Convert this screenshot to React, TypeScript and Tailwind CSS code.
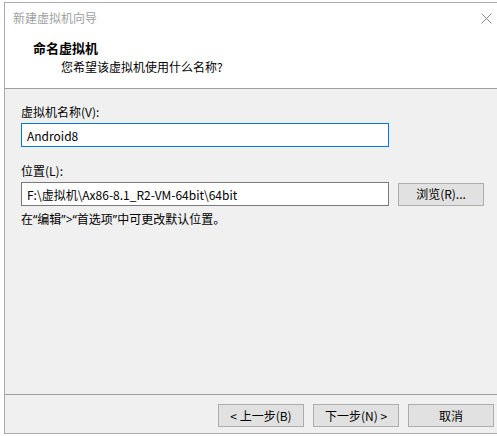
import React, { useState } from 'react';

const font = "font-['Noto_Sans_CJK_SC',sans-serif]";

const WizardButton = ({ label, className = '' }: { label: string; className?: string }) => (
  <button
    className={`h-[23px] w-[86px] border border-[#adadad] bg-[#e1e1e1] text-[12px] text-black leading-none ${className}`}
  >
    {label}
  </button>
);

const App = () => {
  const [name, setName] = useState('Android8');
  const [location, setLocation] = useState('F:\\虚拟机\\Ax86-8.1_R2-VM-64bit\\64bit');

  return (
    <div className={`w-[497px] h-[436px] bg-white pt-[2px] pl-[4px] overflow-hidden ${font}`}>
      <div className="h-[432px] flex flex-col border-t border-l border-b border-[#aaaaaa] bg-[#f0f0f0]">
        {/* title bar + header */}
        <div className="bg-white border-b border-[#a0a0a0]">
          <div className="h-[30px] flex items-center justify-between pl-[8px] pr-[4px]">
            <span className="text-[12px] text-[#a0a0a0]">新建虚拟机向导</span>
            <svg width="11" height="11" viewBox="0 0 11 11" className="mr-[1px]">
              <path d="M0.5 0.5 L10.5 10.5 M10.5 0.5 L0.5 10.5" stroke="#8a8a8a" strokeWidth="1" />
            </svg>
          </div>
          <div className="h-[55px] pt-[6px] pl-[28px]">
            <div className="text-[13px] font-bold leading-[18px] text-black">命名虚拟机</div>
            <div className="mt-[2px] pl-[28px] text-[12px] leading-[16px] text-black">您希望该虚拟机使用什么名称?</div>
          </div>
        </div>

        {/* form */}
        <div className="flex-1 pl-[16px] pt-[15px]">
          <label className="block text-[12px] leading-[16px] text-black">虚拟机名称(V):</label>
          <input
            value={name}
            onChange={e => setName(e.target.value)}
            className="mt-[3px] block h-[24px] w-[368px] border border-[#0078d7] bg-white px-[5px] text-[12px] text-black outline-none"
          />

          <label className="mt-[16px] block text-[12px] leading-[16px] text-black">位置(L):</label>
          <div className="mt-[3px] flex items-center">
            <input
              value={location}
              onChange={e => setLocation(e.target.value)}
              className="block h-[24px] w-[368px] border border-[#7a7a7a] bg-white px-[5px] text-[12px] text-black outline-none"
            />
            <WizardButton label="浏览(R)..." className="ml-[9px]" />
          </div>
          <div className="mt-[5px] text-[12px] leading-[16px] text-black">
            在<span className="font-['Noto_Sans',sans-serif]">“</span>编辑
            <span className="font-['Noto_Sans',sans-serif]">”&gt;“</span>首选项
            <span className="font-['Noto_Sans',sans-serif]">”</span>中可更改默认位置。
          </div>
        </div>

        {/* footer */}
        <div className="h-[39px] border-t border-[#a0a0a0] flex items-start justify-end gap-[9px] pt-[9px] pr-[3px]">
          <WizardButton label="< 上一步(B)" />
          <WizardButton label="下一步(N) >" />
          <WizardButton label="取消" />
        </div>
      </div>
    </div>
  );
};

export default App;
